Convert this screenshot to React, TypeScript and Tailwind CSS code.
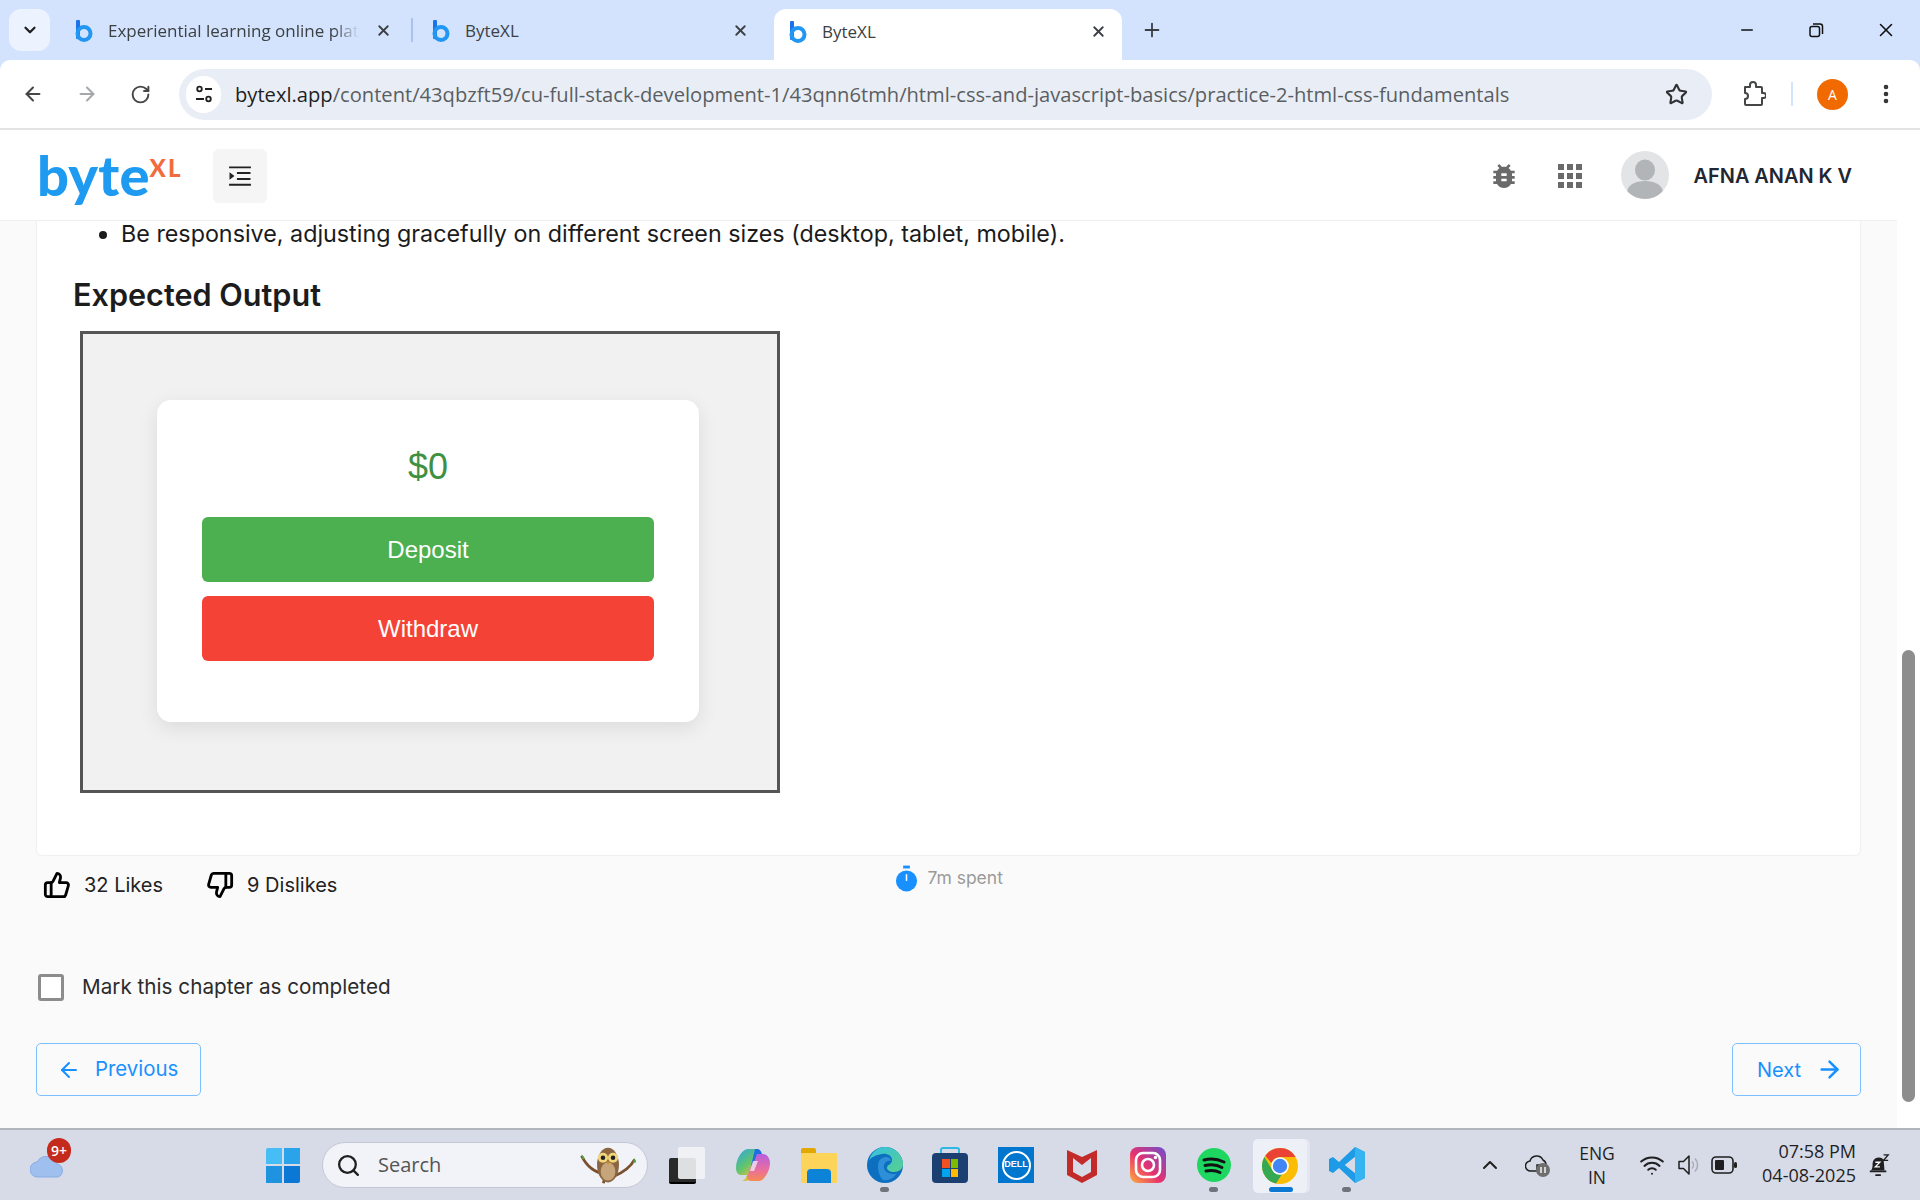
import React from "react";
import { ArrowLeft, ArrowRight, ChevronDown, ChevronUp, EllipsisVertical, Minus, Plus, RotateCw, Star, ThumbsDown, ThumbsUp, X, Search, Wifi } from "lucide-react";
import { AiOutlineMenuUnfold } from "react-icons/ai";
import { MdApps, MdBugReport } from "react-icons/md";

const ui = "font-['Open_Sans',sans-serif]";
const body = "font-['Inter',sans-serif]";

function Favicon({ className = "" }: { className?: string }) {
  return (
    <svg viewBox="0 0 20 24" className={className}>
      <rect x="2" y="1" width="4" height="19" rx="1" fill="#1a73e8" />
      <circle cx="10" cy="14.5" r="6.5" fill="none" stroke="#2196f3" strokeWidth="4" />
    </svg>
  );
}

function Tab({ title, active, fade, closeClass }: { title: string; active?: boolean; fade?: boolean; closeClass: string }) {
  return (
    <div className={`flex items-center relative shrink-0 ${active ? "w-[348px] h-[51px] bg-white rounded-t-[12px] pl-[14px] pb-[5px]" : "h-[44px] mb-[7px]"}`}>
      <Favicon className="w-[20px] h-[24px] shrink-0" />
      <span className={`ml-[14px] text-[17px] text-[#3c4043] whitespace-nowrap overflow-hidden shrink-0 ${fade ? "w-[251px] [mask-image:linear-gradient(to_right,black_90%,transparent)]" : "w-[200px]"} ${ui}`}>{title}</span>
      <X className={`w-[17px] h-[17px] text-[#3b3f44] ml-auto -mt-[2px] ${closeClass}`} strokeWidth={2.6} />
    </div>
  );
}

function TabBar() {
  return (
    <div className="h-[60px] bg-[#d3e3fd] flex items-end shrink-0 pl-[9px]">
      <div className="w-[41px] h-[42px] mb-[9px] rounded-[12px] bg-[#ecf2fe] flex items-center justify-center shrink-0">
        <ChevronDown className="w-[18px] h-[18px] text-[#1f1f1f]" strokeWidth={3} />
      </div>
      <div className="w-[338px] ml-[24px] shrink-0"><Tab title="Experiential learning online platform" fade closeClass="mr-[20px]" /></div>
      <div className="w-[2px] h-[24px] bg-[#a8c4ee] mb-[18px] ml-[-1px] shrink-0" />
      <div className="w-[343px] ml-[18px] shrink-0"><Tab title="ByteXL" closeClass="mr-[25px]" /></div>
      <Tab title="ByteXL" active closeClass="mr-[15px]" />
      <Plus className="w-[22px] h-[22px] text-[#3b3f44] ml-[19px] mb-[19px]" strokeWidth={2} />
      <div className="ml-auto flex items-center mb-[19px] pr-[23px]">
        <Minus className="w-[18px] h-[18px] text-[#111]" strokeWidth={2} />
        <svg viewBox="0 0 16 16" className="w-[16px] h-[16px] ml-[52px]" fill="none" stroke="#111" strokeWidth="1.5">
          <rect x="2" y="4.5" width="9.5" height="10" rx="2" />
          <path d="M5 2h7a2.5 2.5 0 0 1 2.5 2.5V12" />
        </svg>
        <X className="w-[22px] h-[22px] text-[#111] ml-[51px]" strokeWidth={1.7} />
      </div>
    </div>
  );
}

function Toolbar() {
  return (
    <div className="h-[70px] bg-white rounded-t-[10px] border-b-2 border-[#e3e3e3] flex items-center shrink-0 pl-[22px]">
      <ArrowLeft className="w-[22px] h-[22px] text-[#444746]" strokeWidth={2.2} />
      <ArrowRight className="w-[22px] h-[22px] text-[#a5a7a8] ml-[32px]" strokeWidth={2.2} />
      <RotateCw className="w-[21px] h-[21px] text-[#444746] ml-[32px]" strokeWidth={2.2} />
      <div className="w-[1533px] h-[51px] ml-[28px] bg-[#e9eef6] rounded-full flex items-center pl-[7px]">
        <div className="w-[35px] h-[37px] rounded-full bg-white flex items-center justify-center shrink-0">
          <svg viewBox="0 0 20 20" className="w-[20px] h-[20px]" fill="none" stroke="#1f1f1f" strokeWidth="1.8">
            <circle cx="5.5" cy="5" r="2.3" />
            <path d="M11 5h7M2 15h8" />
            <circle cx="14.5" cy="15" r="2.3" />
          </svg>
        </div>
        <span className={`ml-[14px] text-[20.15px] whitespace-nowrap text-[#5a5e62] ${ui}`}>
          <span className="text-[#1f1f1f]">bytexl.app</span>/content/43qbzft59/cu-full-stack-development-1/43qnn6tmh/html-css-and-javascript-basics/practice-2-html-css-fundamentals
        </span>
        <Star className="w-[23px] h-[23px] text-[#2f3134] ml-auto mr-[24px]" strokeWidth={2.2} />
      </div>
      <svg viewBox="0 0 24 26" className="w-[24px] h-[26px] ml-[30px]" fill="none" stroke="#444746" strokeWidth="2" strokeLinejoin="round">
        <path d="M3 6h5V4a3 3 0 0 1 6 0v2h5a1 1 0 0 1 1 1v5h1.5a2.5 2.5 0 0 1 0 5H20v6a1 1 0 0 1-1 1H4a1 1 0 0 1-1-1v-5a3 3 0 0 0 0-6z" />
      </svg>
      <div className="w-[2px] h-[24px] bg-[#d3e3fd] ml-[25px]" />
      <div className={`w-[31px] h-[31px] rounded-full bg-[#f06a00] text-white text-[14px] flex items-center justify-center ml-[24px] ${ui}`}>A</div>
      <EllipsisVertical className="w-[24px] h-[24px] text-[#2f3134] ml-[26px]" strokeWidth={2.6} />
    </div>
  );
}

function AppHeader() {
  return (
    <div className="h-[91px] bg-white border-b border-[#efefef] flex items-center shrink-0 pl-[37px]">
      <div className="w-[150px] flex items-start relative h-[60px] shrink-0">
        <span className="text-[56px] leading-[60px] font-black text-[#1e9bf0] tracking-[0.2px] font-['Lato',sans-serif]">byte</span>
        <span className="text-[24px] leading-[24px] mt-[11px] font-black text-[#f26a3d] tracking-[2px] font-['Lato',sans-serif]">XL</span>
      </div>
      <div className="w-[54px] h-[54px] rounded-[6px] bg-[#f5f5f5] flex items-center justify-center ml-[26px] mt-[1px]">
        <AiOutlineMenuUnfold className="w-[28px] h-[28px] text-[#222]" />
      </div>
      <MdBugReport className="w-[32px] h-[32px] text-[#6a6a6a] ml-auto mt-[1px]" />
      <MdApps className="w-[36px] h-[36px] text-[#6a6a6a] ml-[32px] mt-[1px]" />
      <div className="w-[48px] h-[48px] rounded-full bg-[#e2e4e5] ml-[33px] overflow-hidden flex items-center justify-center">
        <svg viewBox="0 0 48 48" className="w-[48px] h-[48px]" fill="#b1b5b8">
          <ellipse cx="24" cy="19" rx="10" ry="10.5" />
          <path d="M6 42c0-8 8-12 18-12s18 4 18 12v6H6z" />
        </svg>
      </div>
      <span className={`ml-[25px] mr-[45px] mt-[3px] text-[19.9px] font-semibold text-[#1f2733] whitespace-nowrap ${body}`}>AFNA ANAN K V</span>
    </div>
  );
}

function ExpectedOutput() {
  return (
    <div className="w-[700px] h-[462px] ml-[7px] mt-[16px] border-[3px] border-[#555] bg-[#f1f1f1] pl-[74px] pt-[66px] font-['Liberation_Sans',sans-serif]">
      <div className="w-[542px] h-[322px] rounded-[14px] bg-white shadow-[0_6px_20px_rgba(0,0,0,0.09)] px-[45px] flex flex-col items-stretch">
        <div className="text-[36px] leading-[40px] text-[#3f9142] text-center mt-[47px]">$0</div>
        <div className="h-[65px] mt-[30px] rounded-[6px] bg-[#4caf50] text-white text-[24px] flex items-center justify-center">Deposit</div>
        <div className="h-[65px] mt-[14px] rounded-[6px] bg-[#f44336] text-white text-[24px] flex items-center justify-center">Withdraw</div>
      </div>
    </div>
  );
}

function Content() {
  return (
    <div className="h-[635px] mx-[36px] bg-white border border-t-0 border-[#f0f0f0] rounded-b-[6px] overflow-hidden pl-[36px] shrink-0">
      <ul className={`list-disc pl-[48px] text-[23.3px] leading-[26px] text-[#1b1b1b] ${body}`}>
        <li className="whitespace-nowrap">Be responsive, adjusting gracefully on different screen sizes (desktop, tablet, mobile).</li>
      </ul>
      <h2 className={`mt-[28px] text-[30.6px] leading-[40px] font-semibold text-[#1c1c1c] ${body}`}>Expected Output</h2>
      <ExpectedOutput />
    </div>
  );
}

function Footer() {
  return (
    <div className={`flex-1 flex flex-col px-[36px] ${body}`}>
      <div className="flex items-start h-[60px] pt-[13px] pl-[7px] relative">
        <div className="flex items-center h-[32px]">
          <ThumbsUp className="w-[28px] h-[28px] text-black" strokeWidth={2.4} />
          <span className="ml-[13px] text-[20px] text-[#222]">32 Likes</span>
        </div>
        <div className="flex items-center h-[32px] ml-[43px]">
          <ThumbsDown className="w-[28px] h-[28px] text-black" strokeWidth={2.4} />
          <span className="ml-[13px] text-[20px] text-[#222]">9 Dislikes</span>
        </div>
        <div className="flex items-center ml-[558px] -mt-[6px] h-[32px]">
          <svg viewBox="0 0 24 28" className="w-[23px] h-[28px]">
            <rect x="8.5" y="0" width="7" height="3" fill="#1890ff" />
            <circle cx="12" cy="16" r="11" fill="#1890ff" />
            <path d="M12 9v7" stroke="#fff" strokeWidth="1.6" />
          </svg>
          <span className="ml-[9px] text-[17.5px] text-[#9a9a9a] -mt-[1px]">7m spent</span>
        </div>
      </div>
      <div className="flex items-center mt-[57px] pl-[2px]">
        <div className="w-[26px] h-[27px] border-[3px] border-[#8c8c8c] rounded-[3px] bg-white shrink-0" />
        <span className="ml-[18px] -mt-[2px] text-[20.7px] text-[#2b2b2b]">Mark this chapter as completed</span>
      </div>
      <div className="flex justify-between mt-[41px]">
        <div className="w-[165px] h-[53px] rounded-[5px] border border-[#7cc0ff] text-[#1890ff] flex items-center pl-[20px] text-[20.4px]">
          <ArrowLeft className="w-[24px] h-[24px]" strokeWidth={2} />
          <span className="ml-[14px]">Previous</span>
        </div>
        <div className="w-[129px] h-[53px] rounded-[5px] border border-[#7cc0ff] text-[#1890ff] flex items-center pl-[24px] text-[20px]">
          <span>Next</span>
          <ArrowRight className="w-[27px] h-[27px] ml-[15px]" strokeWidth={2.2} />
        </div>
      </div>
    </div>
  );
}

function Scrollbar() {
  return (
    <div className="w-[23px] bg-white shrink-0 pt-[520px] pl-[5px]">
      <div className="w-[13px] h-[452px] rounded-full bg-[#8d8d8d]" />
    </div>
  );
}

const Slot = ({ ml, children, dot }: { ml: number; children: React.ReactNode; dot?: boolean }) => (
  <div className="w-[36px] h-[36px] relative shrink-0" style={{ marginLeft: ml }}>
    {children}
    {dot && <div className="absolute left-[13px] top-[40px] w-[9px] h-[5px] rounded-full bg-[#6f737b]" />}
  </div>
);

function Taskbar() {
  return (
    <div className="h-[72px] bg-[#d7dbe8] border-t-[2px] border-[#b2b4bb] flex items-center shrink-0 relative">
      <div className="w-[40px] h-[40px] ml-[30px] relative shrink-0 -mt-[11px]">
        <svg viewBox="0 0 36 24" className="absolute left-0 top-[14px] w-[36px] h-[24px]">
          <path d="M8 23a7.5 7.5 0 0 1-1-15 11 11 0 0 1 20 2 6.8 6.8 0 0 1 1 13z" fill="#9fc0ef" stroke="#86abe4" />
        </svg>
        <div className={`absolute left-[17px] top-[-2px] w-[24px] h-[25px] rounded-full bg-[#c42b1c] text-white text-[14px] font-semibold flex items-center justify-center ${ui}`}>9+</div>
      </div>
      <div className="grid grid-cols-2 gap-[2px] w-[34px] h-[35px] ml-[196px] shrink-0">
        <div className="bg-[#47bdf5] rounded-tl-[2px]" /><div className="bg-[#2ba3ea]" /><div className="bg-[#1e93e0]" /><div className="bg-[#0a78d4] rounded-br-[2px]" />
      </div>
      <div className="w-[326px] h-[46px] ml-[22px] rounded-full bg-[#f1f3f8] border border-[#c5c8d4] flex items-center pl-[13px] shrink-0 relative">
        <Search className="w-[25px] h-[25px] text-[#1f1f1f]" strokeWidth={2.2} />
        <span className={`ml-[17px] text-[20px] text-[#555] ${ui}`}>Search</span>
        <svg viewBox="0 0 66 46" className="absolute right-[6px] top-[2px] w-[66px] h-[42px]">
          <path d="M4 12c5 10 12 18 26 20M62 16c-4 8-12 14-24 19M30 32l-2 10" stroke="#7a4f2c" strokeWidth="3" fill="none" />
          <path d="M4 10l4 5-3 1zM62 14l-2 6 4-1z" fill="#5d9e48" />
          <ellipse cx="33" cy="22" rx="12" ry="19" fill="#8b6640" />
          <ellipse cx="33" cy="29" rx="8" ry="10" fill="#c7a57a" />
          <circle cx="27.5" cy="14" r="5.5" fill="#f2d77a" /><circle cx="38.5" cy="14" r="5.5" fill="#f2d77a" />
          <circle cx="27.5" cy="14" r="2.5" fill="#222" /><circle cx="38.5" cy="14" r="2.5" fill="#222" />
          <path d="M31 18l2 4 2-4z" fill="#c9922e" />
        </svg>
      </div>
      <Slot ml={21}>
        <div className="absolute left-0 top-[11px] w-[27px] h-[26px] rounded-[2px] bg-[#2a2a2a] border-b-2 border-black" />
        <div className="absolute left-[9px] top-0 w-[27px] h-[32px] rounded-[2px] bg-[#f2f3f5] opacity-90" />
      </Slot>
      <Slot ml={30}>
        <svg viewBox="0 0 36 36" className="w-full h-full">
          <defs>
            <linearGradient id="cp1" x1="0" y1="0" x2="0.6" y2="1"><stop offset="0" stopColor="#2aa6e8" /><stop offset="0.55" stopColor="#62c46c" /><stop offset="1" stopColor="#f3c13c" /></linearGradient>
            <linearGradient id="cp2" x1="0.5" y1="0" x2="0.5" y2="1"><stop offset="0" stopColor="#b65fe0" /><stop offset="0.6" stopColor="#ea6f9c" /><stop offset="1" stopColor="#f58c50" /></linearGradient>
          </defs>
          <path d="M13 2h8c2 0 3 1 4 4l-8 22c-1 3-3 6-6 6H7c3-1 4-3 5-6H6c-3 0-5-3-5-7 0-9 6-19 12-19z" fill="url(#cp1)" />
          <path d="M24 34h-8c-2 0-3-1-4-4l2-5 5-15c1-2 2-3 4-3h5c4 0 7 4 7 9 0 8-6 18-11 18z" fill="url(#cp2)" />
          <path d="M20 2h2c3 0 4 2 5 5h-5l-3 8-3 4z" fill="#1f6fe0" />
          <path d="M18 14h5l-4 10h-4z" fill="#f1e6f6" opacity="0.8" />
        </svg>
      </Slot>
      <Slot ml={30}>
        <div className="absolute left-0 top-[1px] w-[15px] h-[8px] bg-[#e0a800] rounded-t-[2px]" />
        <div className="absolute left-0 top-[6px] w-[36px] h-[30px] bg-[#fdd45a] rounded-[1px]" />
        <div className="absolute left-[6px] top-[22px] w-[24px] h-[14px] bg-[#0c83d6] rounded-t-[4px]" />
      </Slot>
      <Slot ml={30} dot>
        <svg viewBox="0 0 36 36" className="w-full h-full">
          <defs><linearGradient id="eg" x1="0" y1="0" x2="1" y2="1"><stop offset="0" stopColor="#35c1e1" /><stop offset="1" stopColor="#57cf8f" /></linearGradient></defs>
          <circle cx="18" cy="18" r="18" fill="#0c6fc0" />
          <path d="M2 14C4 5 11 0 18 0c10 0 18 8 18 17 0 5-4 8-9 8-4 0-7-2-7-4 0-4 5-3 5-8 0-5-6-7-10-6-6 1-11 3-13 7z" fill="url(#eg)" />
          <path d="M11 19c0-6 4-9 8-9 3 0 5 2 5 4-2-1-6 0-7 4-1 5 3 9 9 9 2 0 3 0 4-1-3 5-8 8-14 7-3-3-5-8-5-14z" fill="#2f8ed8" />
        </svg>
      </Slot>
      <Slot ml={29}>
        <div className="absolute left-[8px] top-0 w-[20px] h-[12px] border-2 border-[#2fb8e6] rounded-t-[3px]" />
        <div className="absolute left-0 top-[6px] w-[36px] h-[30px] bg-[#1c3f72] rounded-[4px] grid grid-cols-2 gap-[1px] p-[6px_10px]">
          <div className="bg-[#f25022]" /><div className="bg-[#7fba00]" /><div className="bg-[#00a4ef]" /><div className="bg-[#ffb900]" />
        </div>
      </Slot>
      <Slot ml={30}>
        <div className="w-full h-full bg-[#0076ce] flex items-center justify-center">
          <div className="w-[29px] h-[29px] rounded-full border-2 border-white text-white text-[9px] font-bold flex items-center justify-center font-['Liberation_Sans',sans-serif]">DELL</div>
        </div>
      </Slot>
      <Slot ml={30}>
        <svg viewBox="0 0 36 36" className="w-full h-full">
          <path d="M3 3l15 7 15-7v25l-15 8-15-8zM9 11v14l9 5 9-5V11l-9 7z" fill="#c32b2b" fillRule="evenodd" />
        </svg>
      </Slot>
      <Slot ml={30}>
        <svg viewBox="0 0 36 36" className="w-full h-full">
          <defs><linearGradient id="ig" x1="0" y1="1" x2="1" y2="0"><stop offset="0" stopColor="#fdb03a" /><stop offset="0.45" stopColor="#e7316f" /><stop offset="1" stopColor="#6d4fd0" /></linearGradient></defs>
          <rect width="36" height="36" rx="8" fill="url(#ig)" />
          <rect x="6" y="6" width="24" height="24" rx="7" fill="none" stroke="#fff" strokeWidth="2.6" />
          <circle cx="18" cy="18" r="6" fill="none" stroke="#fff" strokeWidth="2.6" />
          <circle cx="25.5" cy="10.5" r="1.7" fill="#fff" />
        </svg>
      </Slot>
      <Slot ml={30} dot>
        <svg viewBox="0 0 36 36" className="w-full h-full">
          <circle cx="18" cy="18" r="17" fill="#1ed760" />
          <path d="M8 13c7-2 14-1 20 2M9 18.5c6-1.5 12-1 17 2M10 24c5-1 10-.6 14 1.5" stroke="#111" strokeWidth="3" fill="none" strokeLinecap="round" />
        </svg>
      </Slot>
      <div className="w-[54px] h-[54px] ml-[21px] mt-[1px] rounded-[5px] bg-[#eef0f7] flex items-center justify-center relative shrink-0 shadow-[3px_0_0_#e4e6f0]">
        <svg viewBox="0 0 36 36" className="w-[36px] h-[36px]">
          <circle cx="18" cy="18" r="18" fill="#fbbc04" />
          <path d="M18 0a18 18 0 0 1 15.6 9H18a9 9 0 0 0-8.5 6L3.2 7.8A18 18 0 0 1 18 0z" fill="#ea4335" />
          <path d="M2.4 9A18 18 0 0 0 14 35.6l6-9.6A9 9 0 0 1 9.3 20.2z" fill="#34a853" />
          <circle cx="18" cy="18" r="8.8" fill="#fff" />
          <circle cx="18" cy="18" r="7.2" fill="#4285f4" />
        </svg>
        <div className="absolute left-[16px] top-[48px] w-[24px] h-[5px] rounded-full bg-[#0a78d4]" />
      </div>
      <Slot ml={22} dot>
        <svg viewBox="0 0 36 36" className="w-full h-full">
          <path d="M26 0l10 5v26l-10 5-16-15-6 5-4-2V12l4-2 6 5zM26 10l-10 8 10 8z" fill="#1e9be6" fillRule="evenodd" />
          <path d="M26 0l10 5v26l-10 5z" fill="#36b3f1" />
          <path d="M26 10l-10 8 10 8z" fill="#d7dbe8" />
        </svg>
      </Slot>
      <ChevronUp className="w-[24px] h-[24px] text-[#1f1f1f] ml-[113px] shrink-0" strokeWidth={2} />
      <svg viewBox="0 0 26 24" className="w-[26px] h-[24px] ml-[23px] shrink-0">
        <path d="M6 18a5 5 0 0 1-1-10 7 7 0 0 1 13-1 5.5 5.5 0 0 1 3 5H12v6z" fill="#d7dbe8" stroke="#1f1f1f" strokeWidth="1.5" />
        <circle cx="18" cy="17" r="7" fill="#6e6e6e" />
        <path d="M16 14v6M20 14v6" stroke="#fff" strokeWidth="1.4" />
      </svg>
      <div className={`w-[50px] ml-[21px] text-center text-[17.5px] leading-[24px] text-[#1f1f1f] shrink-0 ${ui}`}>ENG<br />IN</div>
      <Wifi className="w-[26px] h-[26px] text-[#1f1f1f] ml-[17px] shrink-0" strokeWidth={1.8} />
      <svg viewBox="0 0 26 26" className="w-[26px] h-[26px] ml-[11px] shrink-0" fill="none" strokeWidth="1.5">
        <path d="M3 9.5h4.5L13 4v18l-5.5-5.5H3z" stroke="#1f1f1f" strokeLinejoin="round" />
        <path d="M16 9.5a5 5 0 0 1 0 7M19 6.5a9.500 9.500 0 0 1 0 13" stroke="#a9acb6" />
      </svg>
      <svg viewBox="0 0 26 18" className="w-[26px] h-[18px] ml-[9px] shrink-0">
        <rect x="1" y="1" width="21" height="16" rx="4" fill="none" stroke="#1f1f1f" strokeWidth="1.6" />
        <rect x="4" y="4" width="9" height="10" rx="1" fill="#1f1f1f" />
        <rect x="23" y="6" width="3" height="6" rx="1.500" fill="#1f1f1f" />
      </svg>
      <div className={`w-[105px] ml-[14px] -mt-[4px] text-right text-[18px] leading-[24px] text-[#1f1f1f] shrink-0 ${ui}`}>07:58 PM<br />04-08-2025</div>
      <svg viewBox="0 0 24 26" className="w-[22px] h-[26px] ml-[12px] shrink-0">
        <path d="M3 19c2-2 2-4 2-8a7 7 0 0 1 12-4l1 12z" fill="#1f1f1f" />
        <path d="M2 19h18v2H2zM8 23h6v2H8z" fill="#1f1f1f" />
        <path d="M8 10h5l-5 5h5" stroke="#fff" strokeWidth="1.4" fill="none" />
        <path d="M17 2h5l-5 6h5" stroke="#1f1f1f" strokeWidth="1.5" fill="none" />
      </svg>
    </div>
  );
}

export default function App() {
  return (
    <div className="w-[1920px] h-[1200px] flex flex-col overflow-hidden bg-[#d3e3fd]">
      <TabBar />
      <Toolbar />
      <div className="flex-1 flex min-h-0 bg-white">
        <div className="w-[1897px] bg-[#fafafa] flex flex-col">
          <AppHeader />
          <Content />
          <Footer />
        </div>
        <Scrollbar />
      </div>
      <Taskbar />
    </div>
  );
}
